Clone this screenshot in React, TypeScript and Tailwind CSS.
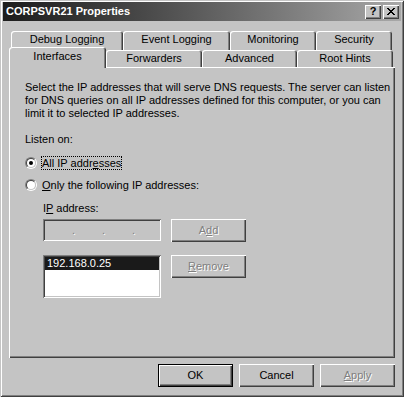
import React from 'react'

const raised = 'shadow-[inset_1px_1px_#fff,inset_-1px_-1px_#404040,inset_-2px_-2px_#808080]'
const sunken = 'shadow-[inset_1px_1px_#808080,inset_-1px_-1px_#fff,inset_2px_2px_#404040,inset_-2px_-2px_#c4c4c4]'
const disabledText = 'text-[#808080] [text-shadow:1px_1px_#fff]'

const backTabs = [
  { label: 'Debug Logging', w: 'w-[112px]' },
  { label: 'Event Logging', w: 'w-[107px]' },
  { label: 'Monitoring', w: 'w-[86px]' },
  { label: 'Security', w: 'w-[76px]' },
]

const frontTabs = [
  { label: 'Interfaces', w: 'w-[97px]', selected: true },
  { label: 'Forwarders', w: 'w-[96px]' },
  { label: 'Advanced', w: 'w-[95px]' },
  { label: 'Root Hints', w: 'w-[96px]' },
]

function Button({ children, disabled, isDefault }: { children: React.ReactNode; disabled?: boolean; isDefault?: boolean }) {
  const frame = isDefault
    ? 'shadow-[inset_1px_1px_#000,inset_-1px_-1px_#000,inset_2px_2px_#fff,inset_-2px_-2px_#404040,inset_-3px_-3px_#808080]'
    : raised
  return (
    <div className={`w-[75px] h-[23px] flex items-center justify-center bg-[#c4c4c4] ${frame} ${disabled ? disabledText : ''}`}>
      <span>{children}</span>
    </div>
  )
}

function Radio({ checked }: { checked?: boolean }) {
  return (
    <div className="w-[12px] h-[12px] shrink-0 rounded-full border border-t-[#808080] border-l-[#808080] border-b-white border-r-white">
      <div className="w-full h-full rounded-full border border-t-[#404040] border-l-[#404040] border-b-[#c4c4c4] border-r-[#c4c4c4] bg-white flex items-center justify-center">
        {checked && <div className="w-[4px] h-[4px] rounded-full bg-black" />}
      </div>
    </div>
  )
}

export default function App() {
  return (
    <div className="w-[404px] h-[397px] bg-[#c4c4c4] pt-[2px] px-[3px] shadow-[inset_1px_1px_#c4c4c4,inset_-1px_-1px_#404040,inset_2px_2px_#fff,inset_-2px_-2px_#808080] font-['Liberation_Sans',Arial,sans-serif] text-[11px] leading-[13px] text-black">
      {/* Title bar */}
      <div className="h-[19px] flex items-center justify-between bg-linear-to-r from-[#1c1c1c] to-[#a8a8a8] px-[2px]">
        <span className="text-white font-bold text-[11px] pl-px">CORPSVR21 Properties</span>
        <div className="flex gap-[2px]">
          <div className={`w-[16px] h-[14px] bg-[#c4c4c4] ${raised} flex items-center justify-center font-bold text-[11px] leading-none`}>?</div>
          <div className={`w-[16px] h-[14px] bg-[#c4c4c4] ${raised} flex items-center justify-center`}>
            <svg width="8" height="7" viewBox="0 0 8 7" shapeRendering="crispEdges">
              <path
                fill="#000"
                d="M0 0h2v1H0z M6 0h2v1H6z M1 1h2v1H1z M5 1h2v1H5z M2 2h4v1H2z M3 3h2v1H3z M2 4h4v1H2z M1 5h2v1H1z M5 5h2v1H5z M0 6h2v1H0z M6 6h2v1H6z"
              />
            </svg>
          </div>
        </div>
      </div>

      <div className="mx-[6px] mt-[10px]">
        {/* Tabs, back row */}
        <div className="flex pl-[2px] h-[19px]">
          {backTabs.map(t => (
            <div key={t.label} className={`${t.w} h-full rounded-t-[3px] pb-[2px] flex items-center justify-center shadow-[inset_1px_1px_#fff,inset_-1px_0_#404040,inset_-2px_0_#808080]`}>
              {t.label}
            </div>
          ))}
        </div>
        {/* Tabs, front row */}
        <div className="flex items-end h-[17px]">
          {frontTabs.map(t => (
            <div
              key={t.label}
              className={`${t.w} rounded-t-[3px] flex items-center justify-center bg-[#c4c4c4] shadow-[inset_1px_1px_#fff,inset_-1px_0_#404040,inset_-2px_0_#808080] ${t.selected ? 'h-[21px] -mb-px relative z-10 pb-[2px]' : 'h-full'}`}
            >
              {t.label}
            </div>
          ))}
        </div>

        {/* Panel */}
        <div className="h-[291px] pt-[14px] pl-[16px] shadow-[inset_1px_1px_#fff,inset_-1px_-1px_#404040,inset_-2px_-2px_#808080]">
          <p className="whitespace-nowrap">
            Select the IP addresses that will serve DNS requests. The server can listen
            <br />
            for DNS queries on all IP addresses defined for this computer, or you can
            <br />
            limit it to selected IP addresses.
          </p>
          <p className="mt-[13px]">Listen on:</p>
          <div className="mt-[6px]">
            <div className="h-[22px] flex items-center">
              <Radio checked />
              <span className="ml-[4px] border border-dotted border-black leading-[12px]">
                All IP addr<u>e</u>sses
              </span>
            </div>
            <div className="h-[22px] flex items-center">
              <Radio />
              <span className="ml-[4px] border border-transparent leading-[12px]">
                <u>O</u>nly the following IP addresses:
              </span>
            </div>
          </div>

          <div className="pl-[18px]">
            <p className="mt-[6px]">I<u>P</u> address:</p>
            <div className="mt-[4px] flex gap-[10px]">
              <div className={`w-[118px] h-[22px] bg-[#c4c4c4] ${sunken} flex items-center pl-[29px] gap-[28px] ${disabledText}`}>
                <span className="w-[2px]">.</span>
                <span className="w-[2px]">.</span>
                <span className="w-[2px]">.</span>
              </div>
              <Button disabled>
                A<u>d</u>d
              </Button>
            </div>
            <div className="mt-[13px] flex gap-[10px] items-start">
              <div className={`w-[118px] h-[43px] bg-white ${sunken} p-[2px]`}>
                <div className="h-[13px] bg-[#1a1a1a] text-white pl-[2px] leading-[13px]">192.168.0.25</div>
              </div>
              <Button disabled>
                <u>R</u>emove
              </Button>
            </div>
          </div>
        </div>

        {/* Dialog buttons */}
        <div className="mt-[6px] flex justify-end gap-[6px]">
          <Button isDefault>OK</Button>
          <Button>Cancel</Button>
          <Button disabled>
            <u>A</u>pply
          </Button>
        </div>
      </div>
    </div>
  )
}
